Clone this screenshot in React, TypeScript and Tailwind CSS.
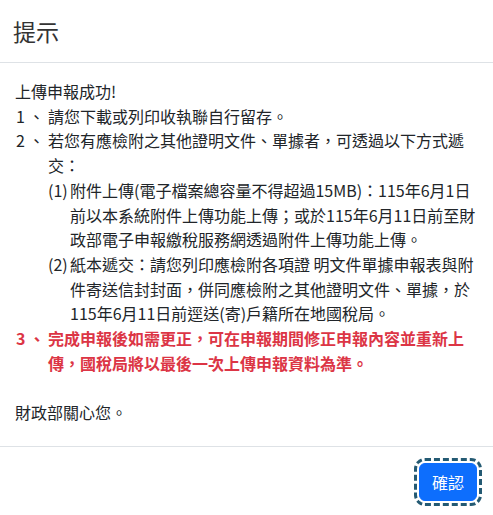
export default function App() {
  return (
    <div className="min-h-screen bg-white text-[#212529] font-['Noto_Sans_CJK_TC',sans-serif]">
      <div className="flex flex-col">
        <div className="border-b border-[#dee2e6] px-[13px] py-4">
          <h5 className="text-[23px] leading-[30px] font-normal text-[#333]">提示</h5>
        </div>

        <div className="pl-[15px] pr-4 pt-4 pb-[21px] text-[16px] leading-[24.7px]">
          <p>上傳申報成功!</p>
          <div className="flex">
            <span className="w-[33px] shrink-0 whitespace-pre pl-[1px]">1 、</span>
            <span className="flex-1">請您下載或列印收執聯自行留存。</span>
          </div>
          <div className="flex">
            <span className="w-[33px] shrink-0 whitespace-pre pl-[1px]">2 、</span>
            <div className="flex-1">
              <p>若您有應檢附之其他證明文件、單據者，可透過以下方式遞交：</p>
              <div className="flex">
                <span className="w-[22px] shrink-0">(1)</span>
                <span className="flex-1">
                  附件上傳(電子檔案總容量不得超過15MB)：115年6月1日前以本系統附件上傳功能上傳；或於115年6月11日前至財政部電子申報繳稅服務網透過附件上傳功能上傳。
                </span>
              </div>
              <div className="flex">
                <span className="w-[22px] shrink-0">(2)</span>
                <span className="flex-1">
                  紙本遞交：請您列印應檢附各項證 明文件單據申報表與附件寄送信封封面，併同應檢附之其他證明文件、單據，於115年6月11日前逕送(寄)戶籍所在地國稅局。
                </span>
              </div>
            </div>
          </div>
          <div className="flex font-bold text-[#dc3545]">
            <span className="w-[33px] shrink-0 whitespace-pre pl-[1px]">3 、</span>
            <span className="flex-1">
              完成申報後如需更正，可在申報期間修正申報內容並重新上傳，國稅局將以最後一次上傳申報資料為準。
            </span>
          </div>
          <br />
          <p>財政部關心您。</p>
        </div>

        <div className="flex justify-end border-t border-[#dee2e6] px-3 py-3">
          <button
            type="button"
            className="m-1 rounded-md border border-[#0d6efd] bg-[#0d6efd] px-3 py-[6px] text-[16px] leading-[24px] text-white outline-dashed outline-[3px] outline-offset-2 outline-[#245a73]"
          >
            確認
          </button>
        </div>
      </div>
    </div>
  );
}
